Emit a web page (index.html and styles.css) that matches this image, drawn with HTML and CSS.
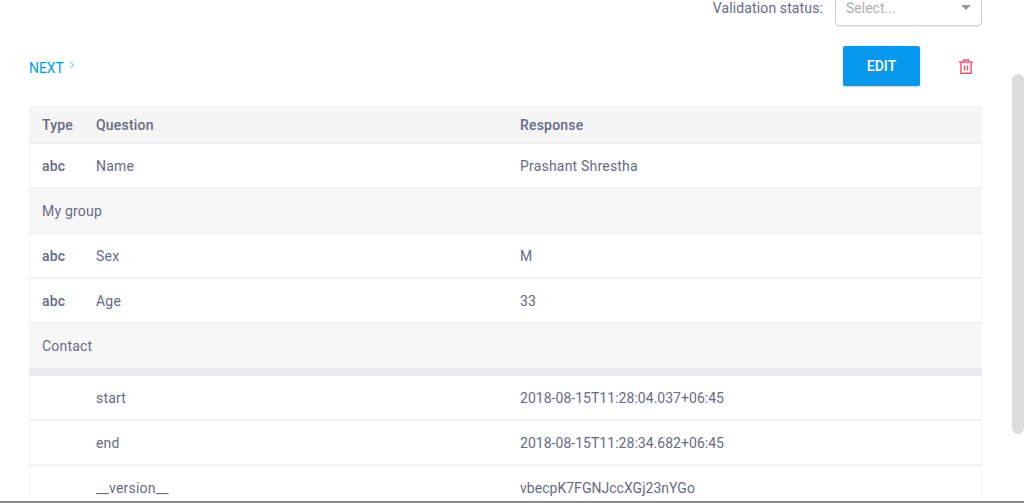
FILE: index.html
```
<!DOCTYPE html>
<html lang="en">
<head>
<meta charset="utf-8">
<title>Submission</title>
<link rel="stylesheet" href="styles.css">
</head>
<body>
<div class="viewport">
  <main class="page">
    <div class="status-row">
      <span class="status-label">Validation status:</span>
      <div class="select"><span>Select...</span><i class="caret"></i></div>
    </div>
    <div class="action-row">
      <a class="next">NEXT<svg class="chev" width="6" height="8" viewBox="0 0 6 8"><path d="M1.5 1l3 3-3 3" fill="none" stroke="#4ab4f4" stroke-width="1"/></svg></a>
      <div class="actions">
        <button class="edit">EDIT</button>
        <svg class="trash" width="14" height="16" viewBox="0 0 14 16"><g fill="none" stroke="#f6516f" stroke-width="1.4"><path d="M0 3h14"/><path d="M4.5 3V1h5v2"/><path d="M1.9 3v11.3h10.2V3"/><path d="M5.5 6.5v5M8.5 6.5v5"/></g></svg>
      </div>
    </div>
    <table class="data">
      <colgroup><col class="c-type"><col class="c-q"><col></colgroup>
      <thead><tr><th>Type</th><th>Question</th><th>Response</th></tr></thead>
      <tbody>
        <tr><td class="type">abc</td><td>Name</td><td>Prashant Shrestha</td></tr>
        <tr class="group"><td colspan="3">My group</td></tr>
        <tr><td class="type">abc</td><td>Sex</td><td>M</td></tr>
        <tr><td class="type">abc</td><td>Age</td><td>33</td></tr>
        <tr class="group last"><td colspan="3">Contact</td></tr>
        <tr><td></td><td>start</td><td class="stamp">2018-08-15T11:28:04.037+06:45</td></tr>
        <tr><td></td><td>end</td><td class="stamp">2018-08-15T11:28:34.682+06:45</td></tr>
        <tr><td></td><td>__version__</td><td class="stamp">vbecpK7FGNJccXGj23nYGo</td></tr>
      </tbody>
    </table>
  </main>
  <div class="thumb"></div>
  <div class="edge"></div>
</div>
</body>
</html>
```
FILE: styles.css
```
* { box-sizing: border-box; }
html, body { margin: 0; padding: 0; background: #fff; }
body { font-family: Roboto, "Liberation Sans", sans-serif; font-size: 14px; color: #676a85; }
.viewport { position: relative; width: 1024px; height: 503px; overflow: hidden; }
.page { margin-top: -12px; padding: 0 42px 0 29px; }
.status-row { display: flex; justify-content: flex-end; align-items: center; gap: 12px; height: 38px; padding-top: 1px; }
.status-label { letter-spacing: .12px; padding-top: 1px; }
.select { width: 147px; height: 38px; border: 1px solid #d0d0d0; border-radius: 4px; display: flex; align-items: center; justify-content: space-between; padding: 1px 10px 0; color: #aeaeae; box-shadow: 0 1px 1px rgba(0,0,0,.06); margin-top: -1px; }
.caret { width: 0; height: 0; border-left: 5px solid transparent; border-right: 5px solid transparent; border-top: 5px solid #999; }
.action-row { display: flex; justify-content: space-between; align-items: center; margin-top: 20px; height: 40px; }
.next { color: #0a9bec; letter-spacing: -.1px; display: flex; gap: 5px; margin-top: 4px; }
.chev { margin-top: 1px; }
.actions { display: flex; align-items: center; gap: 39px; padding-right: 9px; }
.edit { width: 77px; height: 40px; border: 0; border-radius: 2px; background: #0697ee; color: #fff; font: 500 14px Roboto, sans-serif; box-shadow: 0 1px 2px rgba(0,0,0,.2); padding: 0 0 1px; }
.trash { display: block; margin-top: 2px; }
.data { width: 953px; margin-top: 20px; border-collapse: separate; border-spacing: 0; table-layout: fixed; }
.c-type { width: 67px; }
.c-q { width: 424px; }
th, td { padding: 0; text-align: left; letter-spacing: .2px; }
th:first-child { padding-left: 13px; }
td { height: 45px; border-bottom: 2px solid #f1f1f3; }
td:first-child { padding-left: 12px; border-left: 1px solid #f4f4f5; }
td:last-child { border-right: 1px solid #f4f4f5; }
th { height: 38px; background: #f5f5f6; font-weight: 500; border-bottom: 1px solid #f0f0f2; }
.type { font-weight: 500; }
.stamp { letter-spacing: .03px; }
.group td { background: #f7f7f8; border-left: 0; border-right: 0; padding-left: 13px; }
.group.last td { height: 52px; border-bottom: 8px solid #e9e9ee; }
.thumb { position: absolute; right: 0; top: 74px; width: 12px; height: 360px; background: #dcdcdc; border-radius: 6px; }
.edge { position: absolute; left: 0; right: 0; bottom: 0; height: 2px; background: #8a8a8a; }
```
